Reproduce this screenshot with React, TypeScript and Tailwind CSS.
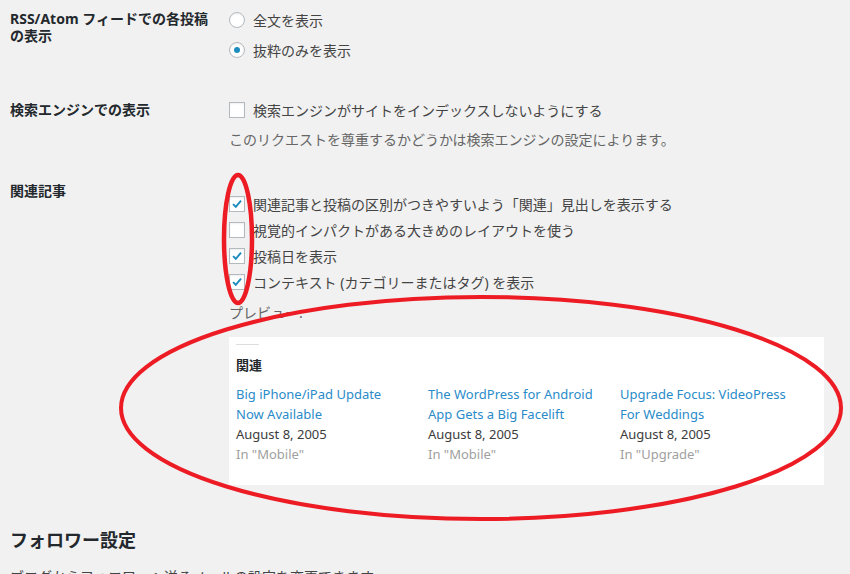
import React from 'react';

const font = { fontFamily: '"Noto Sans", "Noto Sans CJK JP", sans-serif' };

const Radio: React.FC<{ checked?: boolean; label: string }> = ({ checked, label }) => (
  <label className="flex h-[30px] items-center gap-2 text-[14px] text-[#444]">
    <span className="flex h-4 w-4 items-center justify-center rounded-full border border-[#b4b9be] bg-white shadow-[inset_0_1px_2px_rgba(0,0,0,0.07)]">
      {checked && <span className="h-[6px] w-[6px] rounded-full bg-[#1e8cbe]" />}
    </span>
    {label}
  </label>
);

const Check: React.FC<{ checked?: boolean; label: string; h?: string }> = ({ checked, label, h = 'h-[26px]' }) => (
  <label className={`flex ${h} items-center gap-2 text-[14px] text-[#444]`}>
    <span className="flex h-4 w-4 items-center justify-center border border-[#b4b9be] bg-white shadow-[inset_0_1px_2px_rgba(0,0,0,0.07)]">
      {checked && (
        <svg viewBox="0 0 16 16" className="h-[14px] w-[14px]">
          <path d="M3.5 8.2 L6.6 11.2 L12.6 4.2" fill="none" stroke="#1e8cbe" strokeWidth="2.2" />
        </svg>
      )}
    </span>
    {label}
  </label>
);

const posts = [
  { title: ['Big iPhone/iPad Update', 'Now Available'], cat: 'Mobile' },
  { title: ['The WordPress for Android', 'App Gets a Big Facelift'], cat: 'Mobile' },
  { title: ['Upgrade Focus: VideoPress', 'For Weddings'], cat: 'Upgrade' },
];

export default function App() {
  return (
    <div className="relative h-[574px] w-[850px] overflow-hidden bg-[#f1f1f1] pl-[10px]" style={font}>
      {/* RSS */}
      <div className="grid grid-cols-[219px_1fr] pt-[5px]">
        <div className="pt-[5px] text-[14px] font-bold leading-[17px] text-[#23282d]">
          RSS/Atom フィードでの各投稿
          <br />
          の表示
        </div>
        <div>
          <Radio label="全文を表示" />
          <Radio checked label="抜粋のみを表示" />
        </div>
      </div>

      {/* 検索エンジン */}
      <div className="mt-[30px] grid grid-cols-[219px_1fr]">
        <div className="text-[14px] font-bold leading-[30px] text-[#23282d]">検索エンジンでの表示</div>
        <div>
          <Check label="検索エンジンがサイトをインデックスしないようにする" h="h-[30px]" />
          <p className="text-[14px] leading-[30px] text-[#666]">このリクエストを尊重するかどうかは検索エンジンの設定によります。</p>
        </div>
      </div>

      {/* 関連記事 */}
      <div className="mt-[21px] grid grid-cols-[219px_1fr]">
        <div className="text-[14px] font-bold leading-[30px] text-[#23282d]">関連記事</div>
        <div className="pt-[15px]">
          <Check checked label="関連記事と投稿の区別がつきやすいよう「関連」見出しを表示する" />
          <Check label="視覚的インパクトがある大きめのレイアウトを使う" />
          <Check checked label="投稿日を表示" />
          <Check checked label="コンテキスト (カテゴリーまたはタグ) を表示" />
          <p className="mt-[3px] text-[14px] leading-[30px] text-[#666]">プレビュー:</p>
          <div className="mt-[9px] mr-[26px] bg-white px-[7px] pt-[7px] pb-[21px]">
            <div className="h-px w-[23px] bg-[#ddd]" />
            <div className="mt-[9px] text-[13px] font-bold leading-[22px] text-[#23282d]">関連</div>
            <div className="mt-[8px] grid grid-cols-[192px_192px_1fr] text-[13px] leading-[20px]">
              {posts.map((p) => (
                <div key={p.title[0]}>
                  <div className="text-[#2a8bc9]">
                    {p.title[0]}
                    <br />
                    {p.title[1]}
                  </div>
                  <div className="text-[#3c3c3c]">August 8, 2005</div>
                  <div className="text-[#a0a0a0]">In "{p.cat}"</div>
                </div>
              ))}
            </div>
          </div>
        </div>
      </div>

      {/* フォロワー設定 */}
      <h2 className="mt-[41px] text-[18px] font-bold leading-[28px] text-[#23282d]">フォロワー設定</h2>
      <p className="mt-[13px] text-[14px] leading-[20px] text-[#444]">ブログからフォロワーへ送るメールの設定を変更できます。</p>

      {/* annotation */}
      <svg className="pointer-events-none absolute inset-0" width="850" height="574">
        <ellipse cx="238" cy="239" rx="14" ry="64" fill="none" stroke="#ed1c24" strokeWidth="4.5" />
        <ellipse cx="481" cy="408" rx="360" ry="111" fill="none" stroke="#ed1c24" strokeWidth="4" />
      </svg>
    </div>
  );
}
